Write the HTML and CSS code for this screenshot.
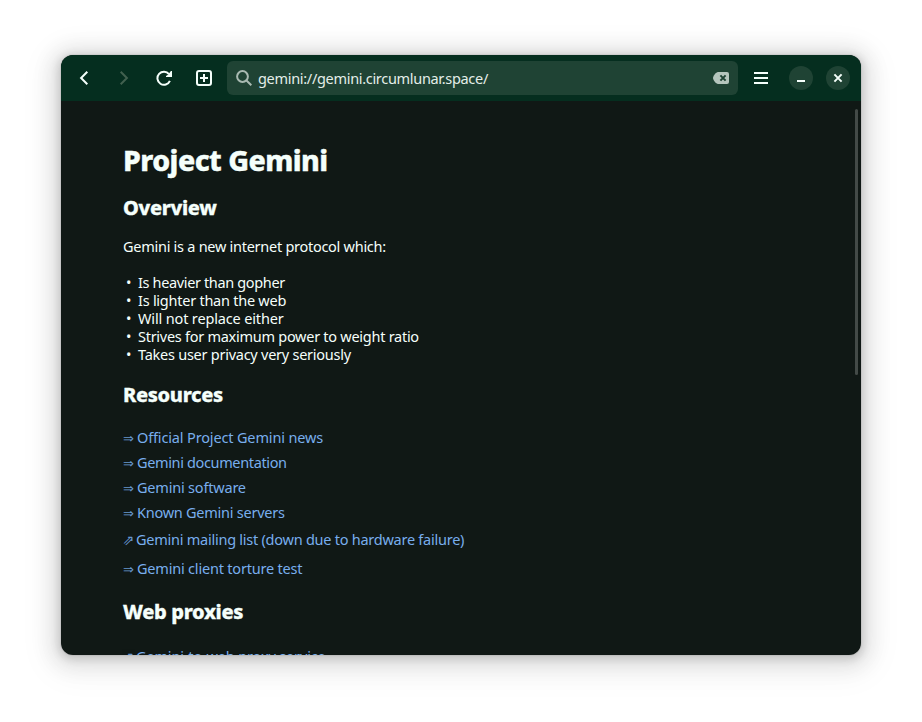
FILE: index.html
```html
<!DOCTYPE html>
<html lang="en">
<head>
<meta charset="utf-8">
<title>Project Gemini</title>
<link rel="stylesheet" href="styles.css">
</head>
<body>
<div class="window">
  <header class="bar">
    <button class="tool" aria-label="Back"><svg width="16" height="16" viewBox="0 0 16 16"><path d="M11.3 1.8 5.1 8l6.2 6.2" /></svg></button>
    <button class="tool dim" aria-label="Forward"><svg width="16" height="16" viewBox="0 0 16 16"><path d="M4.7 1.8 10.9 8l-6.2 6.2" /></svg></button>
    <button class="tool" aria-label="Reload"><svg width="16" height="16" viewBox="0 0 16 16"><path d="M13.9 10.9A6.5 6.5 0 1 1 13 4.2" /><path class="solid" d="M16 1v6h-6V6l2-1.2L14.9 1z" /></svg></button>
    <button class="tool" aria-label="New tab"><svg width="16" height="16" viewBox="0 0 16 16"><rect x="1" y="1" width="14" height="14" rx="2" /><path d="M8 4v8M4 8h8" /></svg></button>
    <div class="entry">
      <svg class="search" width="16" height="16" viewBox="0 0 16 16"><circle cx="6.5" cy="6.5" r="5.4" /><path d="m10.5 10.5 4.8 4.8" /></svg>
      <span class="url">gemini://gemini.circumlunar.space/</span>
      <svg class="clear" width="16" height="12" viewBox="0 0 16 12"><path class="shape" d="M5 0h9a2 2 0 0 1 2 2v8a2 2 0 0 1-2 2H5C3 12 0 8 0 6s3-6 5-6z" /><path class="cross" d="m7.4 3.4 5.2 5.2m0-5.2L7.4 8.6" /></svg>
    </div>
    <button class="tool menu" aria-label="Menu"><svg width="16" height="16" viewBox="0 0 16 16"><path d="M1 3h14M1 8h14M1 13h14" /></svg></button>
    <button class="round" aria-label="Minimize"><svg width="16" height="16" viewBox="0 0 16 16"><path d="M4 11h8" /></svg></button>
    <button class="round" aria-label="Close"><svg width="16" height="16" viewBox="0 0 16 16"><path class="x" d="m4.4 4.4 7.2 7.2m0-7.2-7.2 7.2" /></svg></button>
  </header>
  <main class="page">
    <h1>Project Gemini</h1>
    <h2 class="overview">Overview</h2>
    <p>Gemini is a new internet protocol which:</p>
    <ul>
      <li class="tight">Is heavier than gopher</li>
      <li class="snug">Is lighter than the web</li>
      <li class="loose">Will not replace either</li>
      <li>Strives for maximum power to weight ratio</li>
      <li class="snug">Takes user privacy very seriously</li>
    </ul>
    <h2 class="resources">Resources</h2>
    <nav>
      <a class="loose"><i>⇒</i>Official Project Gemini news</a>
      <a class="tight"><i>⇒</i>Gemini documentation</a>
      <a><i>⇒</i>Gemini software</a>
      <a class="snug"><i>⇒</i>Known Gemini servers</a>
      <a class="external snug"><i>⇗</i>Gemini mailing list (down due to hardware failure)</a>
      <a class="last"><i>⇒</i>Gemini client torture test</a>
    </nav>
    <h2 class="proxies">Web proxies</h2>
    <nav><a class="external loose"><i>⇗</i>Gemini-to-web proxy service</a></nav>
    <div class="scrollbar"></div>
  </main>
</div>
</body>
</html>
```
FILE: styles.css
```css
* { box-sizing: border-box; }
body { margin: 0; padding: 55px 61px; height: 722px; overflow: hidden; background: #fff; font-family: "Noto Sans", sans-serif; font-size: 14.5px; color: #f5fffb; }
.window { width: 800px; height: 600px; border-radius: 12px; overflow: hidden; background: #101815; box-shadow: 0 0 0 1px rgba(0,0,0,.05), 0 2px 8px 2px rgba(0,0,0,.14), 0 3px 20px 10px rgba(0,0,0,.09), 0 6px 32px 16px rgba(0,0,0,.04); display: flex; flex-direction: column; }
.bar { height: 46px; flex: none; background: #052e1f; display: flex; align-items: center; padding: 0 11px 0 6px; }
button { border: 0; padding: 0; background: none; color: #f5fffb; display: flex; align-items: center; justify-content: center; }
svg { display: block; fill: none; stroke: currentColor; stroke-width: 2; }
.tool { width: 34px; height: 34px; margin-right: 6px; }
.dim { color: #42604f; }
.solid { fill: currentColor; stroke: none; }
.entry { width: 511px; height: 34px; border-radius: 6px; background: #1f4334; display: flex; align-items: center; padding: 0 9px; }
.search { color: #a9bab2; }
.url { margin-left: 6px; padding-bottom: 1px; flex: 1; letter-spacing: -.31px; color: #e4eee9; }
.clear .shape { fill: #b5c5bd; stroke: none; }
.clear .cross { stroke: #1f4334; }
.menu { margin: 0 11px 0 6px; }
.round { width: 24px; height: 24px; border-radius: 50%; background: #1f4334; margin-right: 13px; }
.round:last-child { margin: 0; }
.page { position: relative; flex: 1; min-height: 0; overflow: hidden; padding: 40px 62px 0; }
h1, h2, p, ul { margin: 0; padding: 0; font-weight: 800; }
h1 { font-size: 28.5px; line-height: 38px; letter-spacing: -.55px; -webkit-text-stroke: .4px; }
h2 { font-size: 20px; line-height: 26px; letter-spacing: -.35px; -webkit-text-stroke: .3px; }
.overview { margin-top: 16px; }
p { font-weight: 400; line-height: 18px; margin-top: 16px; letter-spacing: -.27px; }
ul { font-weight: 400; line-height: 18px; list-style: none; margin-top: 18px; letter-spacing: -.27px; }
li::before { content: "•"; display: inline-block; width: 12px; padding-left: 3px; letter-spacing: 0; }
.resources { margin-top: 19px; }
nav { margin-top: 17px; }
a { display: block; height: 25px; line-height: 25px; color: #78aeed; letter-spacing: -.2px; white-space: nowrap; }
i { font: 13px "DejaVu Sans"; display: inline-block; width: 14px; letter-spacing: 0; opacity: .85; }
.snug { letter-spacing: -.25px; }
.tight { letter-spacing: -.36px; }
.loose { letter-spacing: -.15px; }
.external { height: 29px; line-height: 29px; }
.external i { width: 13px; font-size: 14px; line-height: 15px; margin-left: -.5px; margin-right: .5px; }
.last { height: 29px; line-height: 29px; }
.proxies { margin-top: 16px; }
.scrollbar { position: absolute; right: 3px; top: 8px; width: 3px; height: 266px; border-radius: 2px; background: #434a47; }
```
